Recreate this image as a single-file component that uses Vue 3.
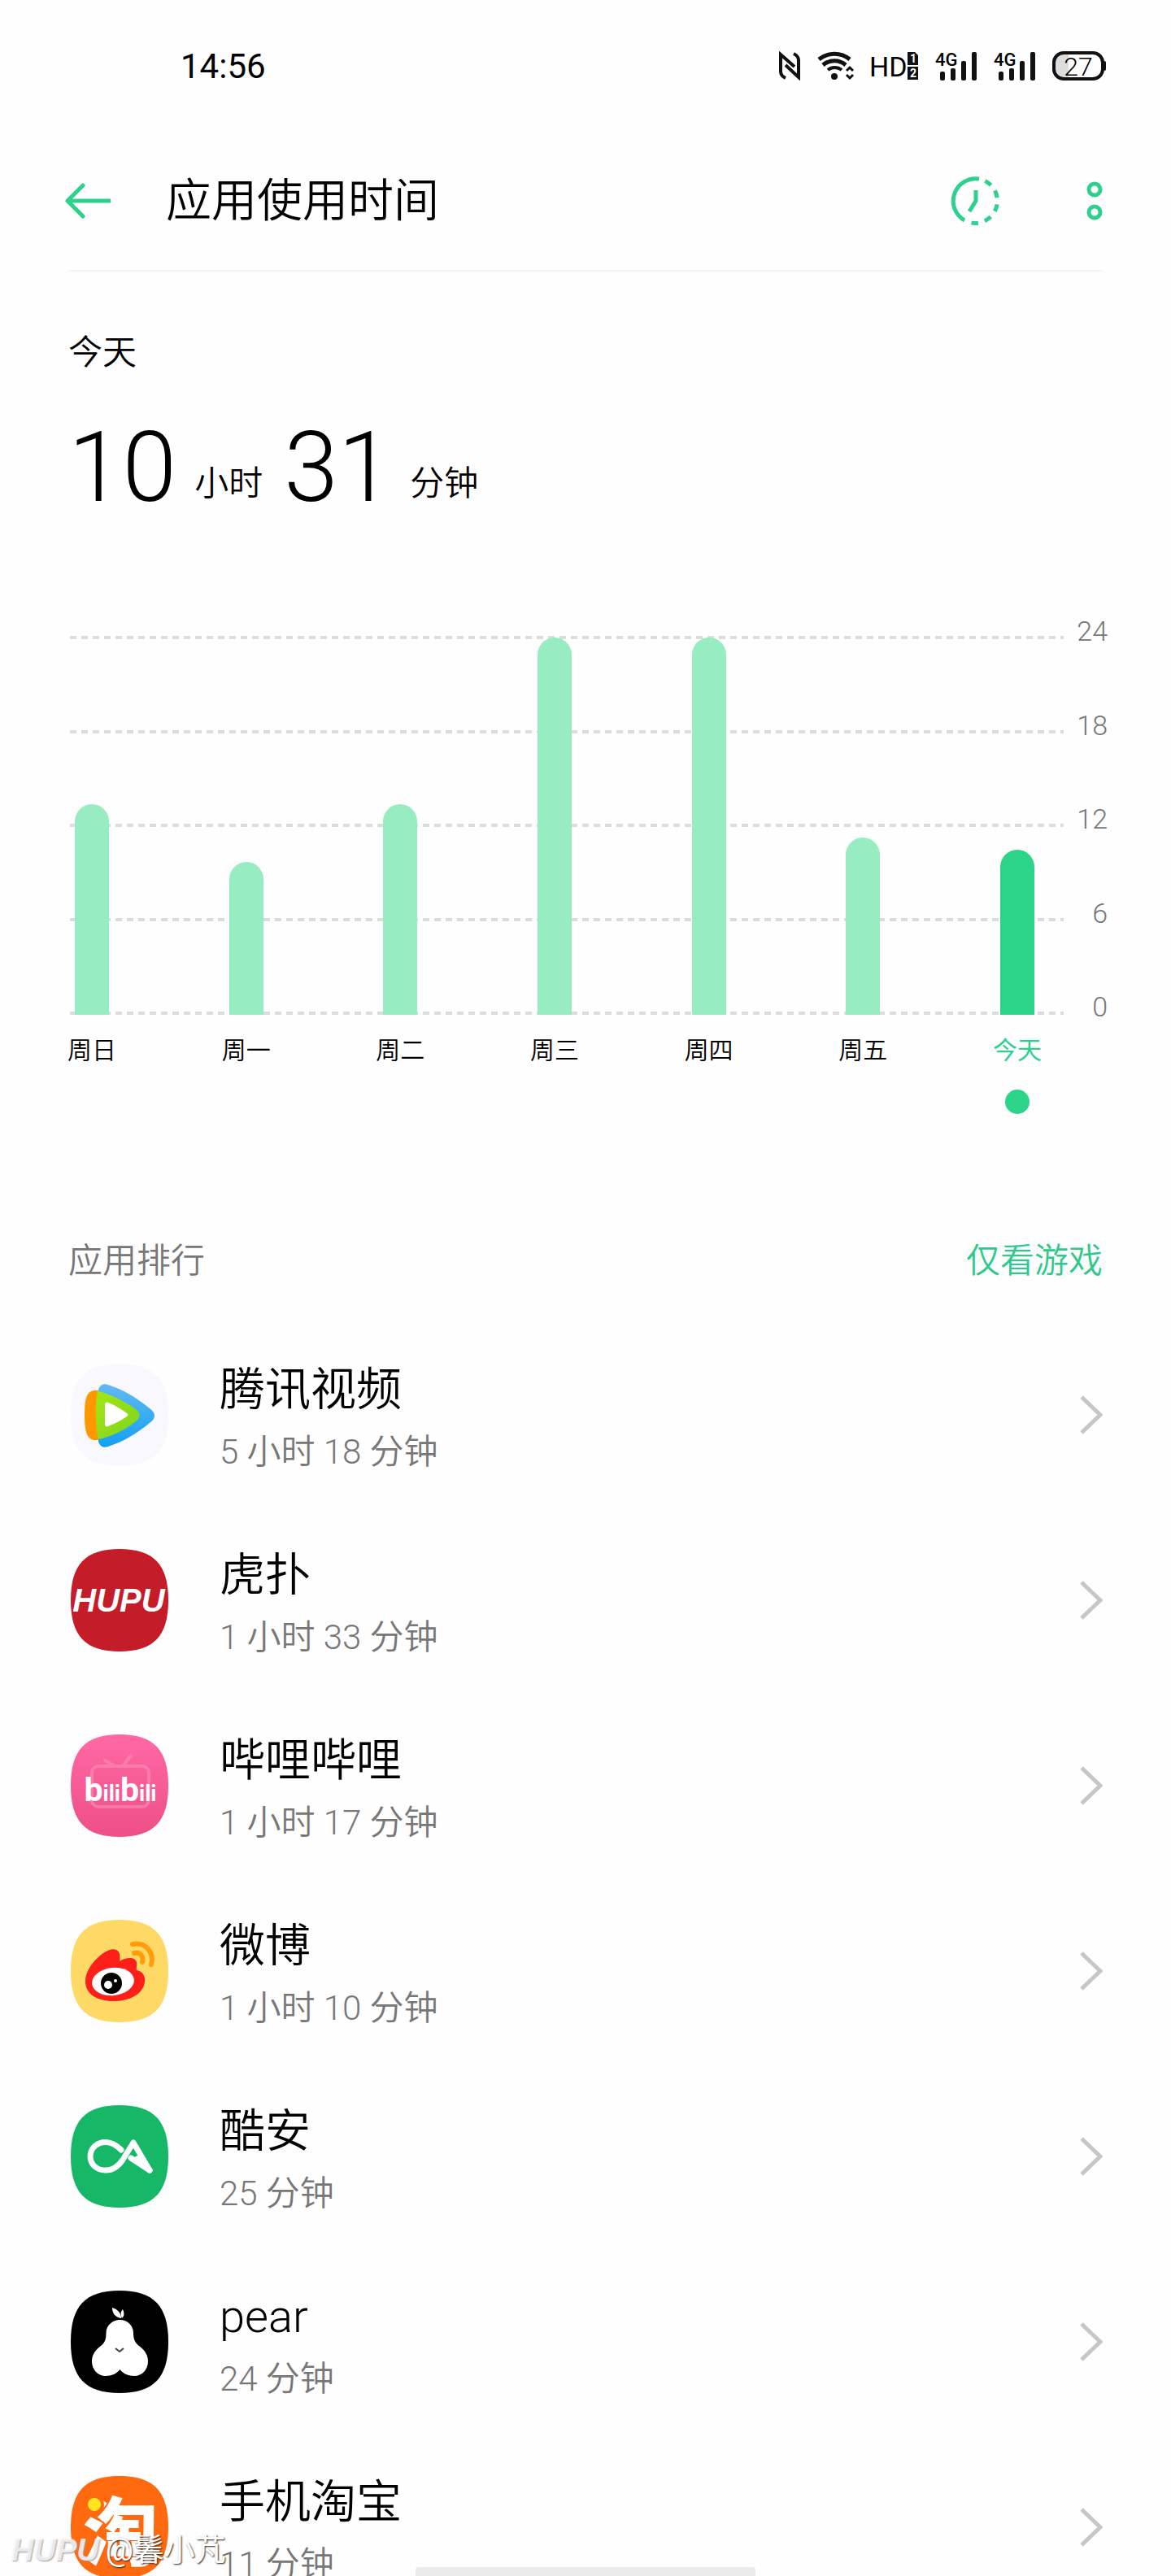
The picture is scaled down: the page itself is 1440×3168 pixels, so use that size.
<template>
  <div class="page">
    <div class="status-bar">
      <span class="clock">14:56</span>
      <div class="status-icons">
        <svg width="26" height="36" viewBox="0 0 26 36" fill="none" stroke="#111" stroke-width="4">
          <path d="M8 33C4 31 2 29 2 25V4L19 19" />
          <path d="M18 3C22 5 24 7 24 11V32L8 17" />
        </svg>
        <svg width="46" height="36" viewBox="0 0 46 36" fill="none" stroke="#111" stroke-width="5">
          <path d="M2 10C13 1 29 1 40 10" />
          <path d="M7 17C15 10 27 10 35 17" />
          <path d="M13 23C18 19 25 19 30 23" stroke-width="4" />
          <circle cx="21" cy="31" r="4" fill="#111" stroke="none" />
          <path d="M36 24L40 20L44 24M36 29L40 33L44 29" stroke-width="3" />
        </svg>
        <svg class="hd-icon" width="57" height="36" viewBox="0 0 57 36">
          <text class="hd" x="-3" y="31">HD</text>
          <path d="M44 1H53L57 5V17H44Z" fill="#111" />
          <rect x="44" y="19" width="13" height="16" fill="#111" />
          <text class="sim" x="47" y="14">1</text>
          <text class="sim" x="47" y="32">2</text>
        </svg>
        <svg v-for="n in 2" :key="n" width="51" height="36" viewBox="0 0 51 36">
          <text class="net" x="0" y="18">4G</text>
          <g fill="#111">
            <rect x="6" y="25" width="6" height="11" rx="2" />
            <rect x="19" y="21" width="6" height="15" rx="2" />
            <rect x="32" y="12" width="6" height="24" rx="2" />
            <rect x="45" y="1" width="6" height="35" rx="2" />
          </g>
        </svg>
        <svg width="66" height="36" viewBox="0 0 66 36">
          <path d="M12 3H20V33H12C6 33 3 29 3 24V12C3 7 6 3 12 3Z" fill="#ddd" />
          <rect x="2" y="2" width="60" height="32" rx="12" fill="none" stroke="#111" stroke-width="4" />
          <rect x="62" y="12" width="4" height="12" rx="2" fill="#111" />
          <text class="level" x="32" y="30" text-anchor="middle">27</text>
        </svg>
      </div>
    </div>

    <header class="header">
      <button class="icon-btn back" aria-label="返回">
        <svg width="56" height="44" viewBox="0 0 56 44" fill="none" stroke="#2fd08c" stroke-width="5">
          <path d="M56 22H3" />
          <path d="M22 3L3 22L22 41" stroke-linecap="round" stroke-linejoin="round" />
        </svg>
      </button>
      <h1>应用使用时间</h1>
      <button class="icon-btn" aria-label="时间管理">
        <svg width="60" height="60" viewBox="0 0 60 60" fill="none" stroke="#2fcf8e" stroke-width="5">
          <path d="M17 54A27.5 27.5 0 0 1 35 3" />
          <path d="M42.3 5.4A27.5 27.5 0 0 1 25.5 57.1" stroke-dasharray="9 8.28" />
          <path d="M31 17V30L23 43" />
        </svg>
      </button>
      <button class="icon-btn more" aria-label="更多">
        <svg width="20" height="48" viewBox="0 0 20 48" fill="none" stroke="#2fcf8e" stroke-width="5">
          <circle cx="10" cy="10" r="7" />
          <circle cx="10" cy="38" r="7" />
        </svg>
      </button>
    </header>

    <section class="summary">
      <p class="day">今天</p>
      <p class="total">
        <span class="num">10</span>
        <span class="unit">小时</span>
        <span class="num">31</span>
        <span class="unit">分钟</span>
      </p>
    </section>

    <section class="chart">
      <div class="plot">
        <div class="lines">
          <i v-for="t in ticks" :key="t"></i>
        </div>
        <div class="bars">
          <div v-for="d in days" :key="d.label" class="col" :class="{ active: d.active }">
            <div class="track">
              <div class="bar" :style="{ height: (d.hours / 24) * 100 + '%' }"></div>
            </div>
            <span class="label">{{ d.label }}</span>
            <span v-if="d.active" class="dot"></span>
          </div>
        </div>
      </div>
      <div class="axis">
        <span v-for="t in ticks" :key="t">{{ t }}</span>
      </div>
    </section>

    <div class="list-head">
      <h2>应用排行</h2>
      <a href="#">仅看游戏</a>
    </div>

    <ul class="list">
      <li v-for="app in apps" :key="app.id">
        <a class="row" href="#">
          <svg class="app-icon" width="120" height="126" viewBox="0 0 120 126">
            <defs>
              <linearGradient id="pink" x1="0" y1="0" x2="0" y2="1">
                <stop offset="0" stop-color="#ff69a6" />
                <stop offset="1" stop-color="#ee4f86" />
              </linearGradient>
              <linearGradient id="blue" x1="0" y1="0" x2="0" y2="1">
                <stop offset="0" stop-color="#63b9f2" />
                <stop offset="1" stop-color="#12a0f5" />
              </linearGradient>
              <linearGradient id="lime" x1="0" y1="0" x2="1" y2="1">
                <stop offset="0" stop-color="#a4e612" />
                <stop offset="1" stop-color="#7fd321" />
              </linearGradient>
            </defs>
            <path :d="shape" :fill="app.bg" />

            <g v-if="app.id === 'video'">
              <path d="M30 33C20 33 17 42 17 63S20 94 30 94H38V33Z" fill="#ff9800" />
              <path d="M34 32C36 26 40 24 46 26C64 32 80 41 97 55C105 61 105 67 97 73C80 87 64 96 46 102C40 104 36 102 34 96Z" fill="url(#blue)" />
              <path d="M33 34C46 36 66 46 80 56C86 60 86 67 80 71C66 82 50 90 34 93C30 78 30 48 33 34Z" fill="url(#lime)" />
              <path d="M42 50C42 48 44 47 46 48C54 51 62 56 69 61C71 62 71 64 69 65C62 70 54 74 46 77C44 78 42 77 42 75Z" fill="#fff" />
            </g>

            <text v-else-if="app.id === 'hupu'" class="logo-hupu" x="59" y="77" text-anchor="middle">HUPU</text>

            <g v-else-if="app.id === 'bili'">
              <g fill="none" stroke="#ff8fb9" stroke-width="4" opacity="0.6">
                <path d="M42 32L54 39M74 26L64 39" stroke-linecap="round" />
                <rect x="26" y="39" width="70" height="50" rx="8" />
              </g>
              <text class="logo-bili" x="61" y="82" text-anchor="middle">
                <tspan class="big">b</tspan><tspan>ili</tspan><tspan class="big">b</tspan><tspan>ili</tspan>
              </text>
            </g>

            <g v-else-if="app.id === 'weibo'">
              <path d="M18 76C18 62 29 49 40 41C50 34 58 35 60 42C61 46 60 49 60 51C68 46 79 45 81 52C82 56 80 59 81 62C88 63 92 69 91 76C89 92 72 100 52 100C32 100 18 91 18 76Z" fill="#ff1f1a" />
              <ellipse cx="52" cy="76" rx="26" ry="17" transform="rotate(-6 52 76)" fill="#fff" />
              <circle cx="50" cy="78" r="13" fill="#000" />
              <circle cx="46" cy="80" r="5" fill="#fff" />
              <circle cx="55" cy="75" r="2" fill="#fff" />
              <g fill="none" stroke="#ff9d0a" stroke-width="6" stroke-linecap="round">
                <path d="M76 30C92 27 103 40 99 55" />
                <path d="M78 41C86 39 90 46 88 52" />
              </g>
            </g>

            <g v-else-if="app.id === 'coolapk'" fill="none" stroke="#fff" stroke-width="7" stroke-linecap="round" stroke-linejoin="round">
              <path d="M74 65L97 80" />
              <path d="M62 55C56 49 50 45.500 43 45.500C32 45.500 24 53 24 63S32 80 43 80C52 80 58 76 64 67L77 46L97 80L82 66" />
            </g>

            <g v-else-if="app.id === 'pear'">
              <path d="M60.500 36C70 36 77 43 77 52C77 60 79 64 84 68C92 74 95 80 95 87C95 97 88 105 78 105C71 105 64 102 60.500 97C57 102 50 105 43 105C33 105 26 97 26 87C26 80 29 74 37 68C42 64 43.500 60 43.500 52C43.500 43 51 36 60.500 36Z" fill="#fff" />
              <path d="M51 21C58 23 62 28 62 34C55 33 51 28 51 21Z" fill="#fff" />
              <path d="M64 23C66 28 66 31 63 34C61 30 61 26 64 23Z" fill="#fff" />
              <path d="M55 71L60 75L65 71" fill="none" stroke="#444" stroke-width="2" />
            </g>

            <g v-else>
              <text class="logo-tao" x="15" y="103">淘</text>
              <circle cx="28" cy="36" r="13" :fill="app.bg" />
              <circle cx="29" cy="35" r="8" fill="#ffe51f" />
            </g>
          </svg>
          <div class="info">
            <span class="name">{{ app.name }}</span>
            <span class="time">{{ app.time }}</span>
          </div>
          <svg class="chevron" width="28" height="48" viewBox="0 0 28 48" fill="none" stroke="#c6c6c6" stroke-width="5">
            <path d="M2 2L25 24L2 46" />
          </svg>
        </a>
      </li>
    </ul>

    <div class="watermark">
      <span class="brand">HUPU</span>
      <span>@鬊小芃</span>
    </div>
    <div class="home-bar"></div>
  </div>
</template>

<script setup>
// 图标外形(圆角超椭圆)
const shape = 'M60 0C102 0 120 19 120 63S102 126 60 126S0 107 0 63S18 0 60 0Z'

const ticks = [24, 18, 12, 6, 0]

const days = [
  { label: '周日', hours: 13.4 },
  { label: '周一', hours: 9.7 },
  { label: '周二', hours: 13.4 },
  { label: '周三', hours: 24 },
  { label: '周四', hours: 24 },
  { label: '周五', hours: 11.3 },
  { label: '今天', hours: 10.5, active: true }
]

const apps = [
  { id: 'video', name: '腾讯视频', time: '5 小时 18 分钟', bg: '#f9f8ff' },
  { id: 'hupu', name: '虎扑', time: '1 小时 33 分钟', bg: '#c51c2a' },
  { id: 'bili', name: '哔哩哔哩', time: '1 小时 17 分钟', bg: 'url(#pink)' },
  { id: 'weibo', name: '微博', time: '1 小时 10 分钟', bg: '#ffd966' },
  { id: 'coolapk', name: '酷安', time: '25 分钟', bg: '#16b868' },
  { id: 'pear', name: 'pear', time: '24 分钟', bg: '#000' },
  { id: 'taobao', name: '手机淘宝', time: '11 分钟', bg: '#ff6a10' }
]
</script>

<style>
body {
  margin: 0;
  background: #fefefe;
}
</style>

<style scoped>
.page {
  position: relative;
  height: 100vh;
  display: flex;
  flex-direction: column;
  overflow: hidden;
  font-family: Roboto, "Noto Sans CJK SC", sans-serif;
  font-weight: 350;
  color: #000;
}
h1, h2, p, ul {
  margin: 0;
  padding: 0;
  font-weight: inherit;
}
a {
  color: inherit;
  text-decoration: none;
}
svg {
  display: block;
  flex: none;
}

.status-bar {
  flex: none;
  height: 162px;
  padding: 0 80px 0 222px;
  display: flex;
  align-items: center;
  justify-content: space-between;
}
.clock {
  font-size: 42px;
  font-weight: 400;
}
.status-icons {
  display: flex;
  gap: 21px;
}
.hd-icon {
  overflow: visible;
}
.hd {
  font-size: 34px;
  font-weight: 400;
}
.sim {
  font-size: 14px;
  font-weight: 700;
  fill: #fff;
}
.net {
  font-size: 22px;
  font-weight: 500;
}
.level {
  font-size: 32px;
}

.header {
  flex: none;
  height: 170px;
  margin: 0 84px;
  display: flex;
  align-items: center;
  border-bottom: 2px solid #f5f5f5;
}
.header h1 {
  flex: 1;
  margin-left: 68px;
  font-size: 56px;
  line-height: 80px;
}
.icon-btn {
  border: none;
  padding: 0;
  background: none;
  cursor: pointer;
}
.back {
  margin-left: -4px;
}
.more {
  margin-left: 107px;
}

.summary {
  padding: 70px 84px 0;
}
.day {
  font-size: 42px;
  line-height: 60px;
}
.total {
  margin-top: 51px;
  display: flex;
  align-items: flex-end;
}
.num {
  font-size: 120px;
  line-height: 120px;
  font-weight: 300;
}
.unit {
  margin: 0 26px 0 22px;
  font-size: 42px;
  line-height: 80px;
}

.chart {
  flex: none;
  display: flex;
  margin: 121px 78px 0 86px;
}
.plot {
  flex: 1;
  display: grid;
  padding-top: 26px;
}
.lines,
.bars {
  grid-area: 1 / 1;
}
.lines {
  height: 466px;
  display: flex;
  flex-direction: column;
  justify-content: space-between;
}
.lines i {
  height: 4px;
  background: repeating-linear-gradient(90deg, #dcdcdc 0 8px, transparent 8px 14px);
}
.bars {
  display: flex;
  justify-content: space-between;
  padding-right: 30px;
}
.col {
  width: 54px;
  display: flex;
  flex-direction: column;
  align-items: center;
}
.track {
  height: 464px;
  padding-top: 2px;
  display: flex;
  align-items: flex-end;
}
.bar {
  width: 42px;
  border-radius: 21px 21px 0 0;
  background: #97ecc1;
}
.label {
  margin-top: 24px;
  font-size: 30px;
  line-height: 40px;
  white-space: nowrap;
}
.dot {
  width: 30px;
  height: 30px;
  margin-top: 28px;
  border-radius: 50%;
  background: #2bd488;
}
.active .bar {
  background: #2bd488;
}
.active .label {
  font-weight: 400;
  color: #2fcf8e;
}
.axis {
  width: 54px;
  height: 502px;
  display: flex;
  flex-direction: column;
  justify-content: space-between;
  text-align: right;
  font-size: 34px;
  line-height: 40px;
  color: #777;
}

.list-head {
  flex: none;
  margin: 151px 84px 0;
  display: flex;
  justify-content: space-between;
  font-size: 42px;
  line-height: 60px;
  color: #777;
}
.list-head h2 {
  font-size: 42px;
}
.list-head a {
  color: #2fc98c;
}

.list {
  flex: 1;
  min-height: 0;
  margin-top: 45px;
  padding: 0 84px 0 87px;
  list-style: none;
  overflow: hidden;
}
.row {
  height: 228px;
  display: flex;
  align-items: center;
}
.info {
  flex: 1;
  margin-left: 63px;
  padding-top: 8px;
  display: flex;
  flex-direction: column;
  gap: 10px;
}
.name {
  font-size: 56px;
  line-height: 74px;
}
.time {
  font-size: 42px;
  line-height: 60px;
  color: #777;
}
.logo-hupu {
  font: italic 700 40px "Liberation Sans", sans-serif;
  fill: #fff;
}
.logo-bili {
  font: 700 27px Roboto, sans-serif;
  fill: #fff;
}
.logo-bili .big {
  font-size: 41px;
}
.logo-tao {
  font: 900 92px "Noto Sans CJK SC", sans-serif;
  fill: #fff;
}

.watermark {
  position: absolute;
  left: 14px;
  bottom: 8px;
  display: flex;
  align-items: center;
  gap: 8px;
  font-size: 38px;
  line-height: 48px;
  font-weight: 400;
  color: #fff;
  text-shadow: 1px 1px 2px #222;
}
.brand {
  font: italic 700 38px "Liberation Sans", sans-serif;
  color: rgba(255, 255, 255, 0.8);
  text-shadow: 1px 1px 2px #999;
}
.home-bar {
  position: absolute;
  left: 50%;
  bottom: 0;
  width: 418px;
  height: 11px;
  transform: translateX(-50%);
  border-radius: 4px 4px 0 0;
  background: #eaeaea;
}
</style>
